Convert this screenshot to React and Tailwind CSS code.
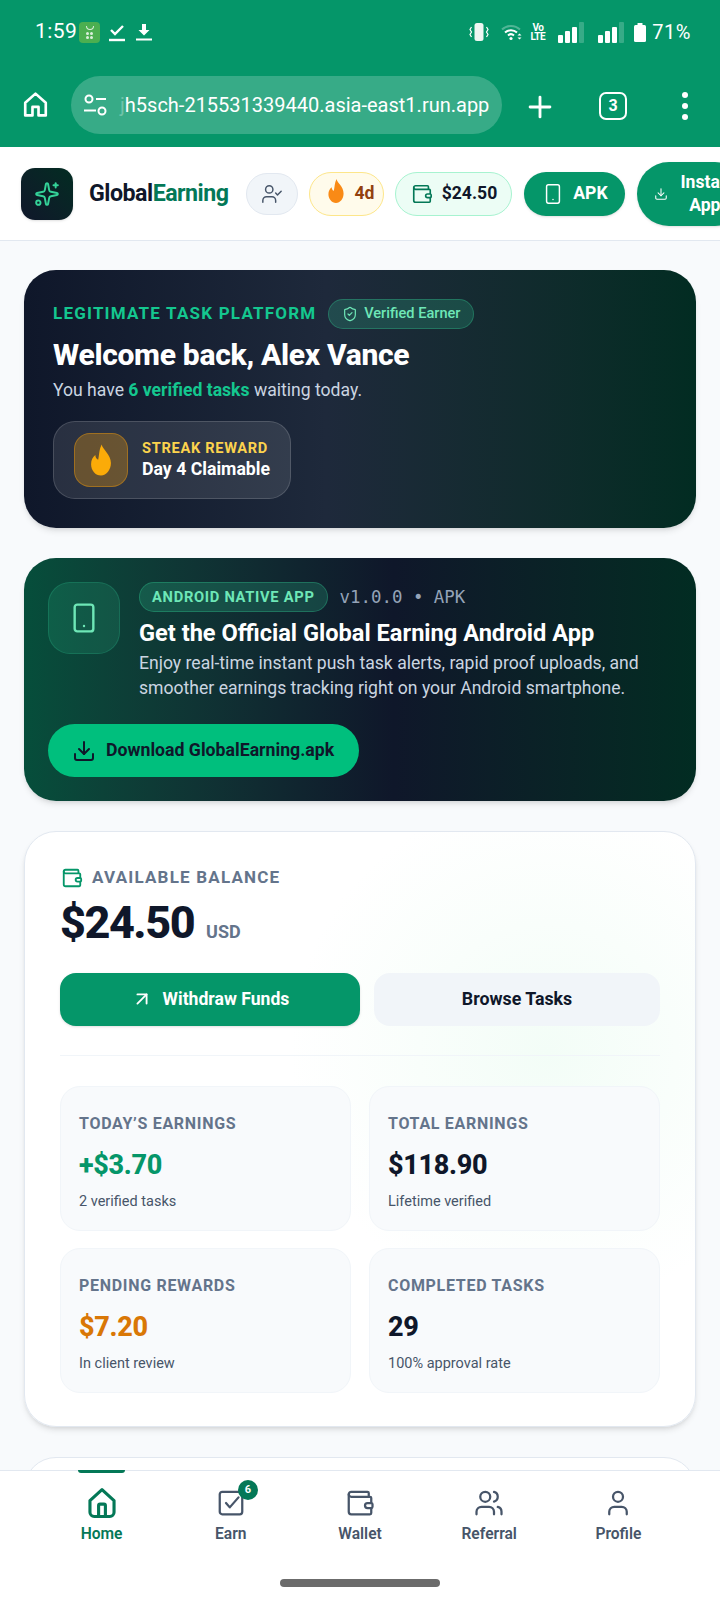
import { useState } from "react";
import {
  Plus,
  Sparkles,
  UserCheck,
  Wallet,
  Smartphone,
  Download,
  ShieldCheck,
  ArrowUpRight,
  Users,
  User,
} from "lucide-react";

const font = { fontFamily: "Roboto, sans-serif" };

const stats = [
  { label: "TODAY’S EARNINGS", value: "+$3.70", sub: "2 verified tasks", color: "text-[#059669]" },
  { label: "TOTAL EARNINGS", value: "$118.90", sub: "Lifetime verified", color: "text-[#0f172a]" },
  { label: "PENDING REWARDS", value: "$7.20", sub: "In client review", color: "text-[#d97706]" },
  { label: "COMPLETED TASKS", value: "29", sub: "100% approval rate", color: "text-[#0f172a]" },
];

const NavHome = ({ strokeWidth, className }) => (
  <svg width="34" height="34" viewBox="0 0 24 24" fill="none" stroke="currentColor" strokeWidth={strokeWidth} strokeLinejoin="round" strokeLinecap="round" className={`-my-[2px] ${className}`}>
    <path d="M3.5 10.3 12 2.5l8.5 7.8V18.5a3 3 0 0 1-3 3h-11a3 3 0 0 1-3-3z" />
    <path d="M9.6 21v-7.2a1 1 0 0 1 1-1h2.8a1 1 0 0 1 1 1V21" />
  </svg>
);

const NavEarn = ({ size, strokeWidth, className }) => (
  <svg width={size} height={size} viewBox="0 0 24 24" fill="none" stroke="currentColor" strokeWidth={strokeWidth} strokeLinecap="round" strokeLinejoin="round" className={className}>
    <rect x="3" y="3" width="18" height="18" rx="2" />
    <path d="M8 12l3 3.5 7-8" />
  </svg>
);

const navItems = [
  { label: "Home", icon: NavHome },
  { label: "Earn", icon: NavEarn, badge: 6 },
  { label: "Wallet", icon: Wallet },
  { label: "Referral", icon: Users },
  { label: "Profile", icon: User },
];

const FlamePath = ({ size, className }) => (
  <svg width={size} height={size} viewBox="0 0 24 24" className={className}>
    <path
      fill="currentColor"
      d="M12.5 1c.6 3.6 6.5 7 6.5 13.2C19 18.9 15.9 23 12 23s-7-3.6-7-8c0-2.9 1.2-5 3-6.5.1 1.7.8 3 2 3.3C10.8 8.5 10.6 4.5 12.5 1z"
    />
  </svg>
);

const Signal = ({ className }) => (
  <svg className={className} width="26" height="21" viewBox="0 0 26 21" fill="white">
    <rect x="0" y="13" width="5" height="8" rx="1" />
    <rect x="7" y="9" width="5" height="12" rx="1" />
    <rect x="14" y="5" width="5" height="16" rx="1" />
    <rect x="21" y="0" width="5" height="21" rx="1" fillOpacity="0.2" />
  </svg>
);

const StatusBar = () => (
  <div className="h-[62px] flex items-center justify-between pl-[35px] pr-[29px] pt-[2px] text-white">
    <div className="flex items-center">
      <span className="text-[21px] tracking-[0.4px]">1:59</span>
      <div className="ml-[2px] w-[21px] h-[21px] rounded-[4px] bg-[#4caf50] flex flex-col items-center justify-center">
        <div className="w-[8px] h-[4px] border-b border-x border-white/80 rounded-b-full mb-[2px]"></div>
        <div className="grid grid-cols-2 gap-[1px]">
          <div className="w-[3px] h-[3px] rounded-full bg-white/80"></div>
          <div className="w-[3px] h-[3px] rounded-full bg-white/80"></div>
          <div className="w-[3px] h-[3px] rounded-full bg-white/80"></div>
          <div className="w-[3px] h-[3px] rounded-full bg-white/80"></div>
        </div>
      </div>
      <svg className="ml-[9px]" width="16" height="20" viewBox="0 0 16 20" fill="none" stroke="white" strokeWidth="2.4">
        <path d="M2 8l4 4 8-8" />
        <path d="M0 18h16" />
      </svg>
      <svg className="ml-[11px]" width="16" height="20" viewBox="0 0 16 20" fill="white">
        <path d="M6 2h4v6h3.5L8 13.5 2.5 8H6z" />
        <rect y="16.5" width="16" height="2" />
      </svg>
    </div>
    <div className="flex items-center">
      <svg width="20" height="20" viewBox="0 0 20 20" fill="none">
        <rect x="5.5" y="1" width="9" height="18" rx="2.5" fill="#eef6f2" />
        <path d="M2.5 5l-1.5 2.5L2.5 10l-1.5 2.5L2.5 15M17.5 5l1.5 2.5L17.5 10l1.5 2.5L17.5 15" stroke="white" strokeWidth="1.2" />
      </svg>
      <svg className="ml-[12px]" width="21" height="18" viewBox="0 0 21 18" fill="none">
        <path d="M1 6.5a13 13 0 0 1 18 0" stroke="white" strokeOpacity="0.3" strokeWidth="2" />
        <path d="M4 9.5a9 9 0 0 1 12 0" stroke="white" strokeWidth="2" />
        <path d="M7 12.5a4.5 4.5 0 0 1 6 0" stroke="white" strokeWidth="2" />
        <circle cx="10" cy="15.5" r="1.6" fill="white" />
        <path d="M16.5 12.5l2-2 2 2zM16.5 14.5l2 2 2-2z" fill="white" />
      </svg>
      <div className="ml-[6px] w-[19px] text-[10px] leading-[9px] font-bold text-white tracking-tighter text-center">
        Vo
        <br />
        LTE
      </div>
      <Signal className="ml-[11px]" />
      <Signal className="ml-[14px]" />
      <svg className="ml-[10px]" width="12" height="19" viewBox="0 0 12 19" fill="white">
        <rect x="3.5" y="0" width="5" height="3" rx="0.5" />
        <rect x="0" y="2" width="12" height="17" rx="1.5" />
      </svg>
      <span className="ml-[6px] text-[20px] tracking-[0.5px]">71%</span>
    </div>
  </div>
);

const BrowserBar = () => (
  <div className="h-[85px] flex items-start pl-[21px] text-white">
    <svg className="mt-[28px] shrink-0" width="29" height="29" viewBox="0 0 24 24" fill="none" stroke="white" strokeWidth="2.2" strokeLinejoin="round">
      <path d="M3.5 10.5 12 3l8.5 7.5V21H14.5v-7h-5v7H3.5z" />
    </svg>
    <div className="ml-[21px] mt-[14px] w-[431px] shrink-0 h-[58px] rounded-full bg-white/20 flex items-center pl-[11px] overflow-hidden">
      <svg className="shrink-0" width="26" height="26" viewBox="0 0 26 26" fill="none" stroke="white" strokeWidth="2">
        <circle cx="7" cy="7" r="3.5" />
        <path d="M14 7h10M2 18.5h12" />
        <circle cx="20" cy="19" r="3.5" />
      </svg>
      <span className="ml-[12px] text-white/30 text-[20px]">j</span>
      <span className="text-[20px] leading-none whitespace-nowrap">h5sch-215531339440.asia-east1.run.app</span>
    </div>
    <Plus size={34} strokeWidth={2} className="ml-[21px] mt-[28px] shrink-0" />
    <div className="ml-[42px] mt-[30px] shrink-0 w-[28px] h-[28px] border-[2.5px] border-white rounded-[7px] flex items-center justify-center text-[16px] font-bold">
      3
    </div>
    <div className="ml-[55px] mt-[30px] flex flex-col gap-[5px]">
      <div className="w-[6px] h-[6px] rounded-full bg-white"></div>
      <div className="w-[6px] h-[6px] rounded-full bg-white"></div>
      <div className="w-[6px] h-[6px] rounded-full bg-white"></div>
    </div>
  </div>
);

const AppHeader = () => (
  <div className="h-[94px] bg-white border-b border-[#e2e8f0] flex items-center pl-[21px] overflow-hidden whitespace-nowrap">
    <div className="w-[52px] h-[52px] shrink-0 rounded-[14px] bg-gradient-to-tr from-[#0f172a] to-[#022c22] flex items-center justify-center shadow-sm">
      <Sparkles size={26} strokeWidth={1.8} className="text-[#34d399]" />
    </div>
    <div className="ml-[16px] text-[23.2px] font-bold tracking-[-0.5px] text-[#0f172a]">
      Global<span className="text-[#047857]">Earning</span>
    </div>
    <div className="ml-[18px] shrink-0 w-[52px] h-[42px] rounded-full bg-[#f1f5f9] border border-[#e2e8f0] flex items-center justify-center">
      <UserCheck size={22} strokeWidth={1.6} className="text-[#475569]" />
    </div>
    <div className="ml-[11px] shrink-0 w-[75px] h-[44px] rounded-full bg-[#fffbeb] border border-[#fde68a] flex items-center pl-[13px] gap-[5px]">
      <FlamePath size={26} className="text-[#f98a16] mb-[6px]" />
      <span className="text-[17.6px] font-bold text-[#92400e]">4d</span>
    </div>
    <div className="ml-[11px] shrink-0 w-[117px] h-[44px] rounded-full bg-[#ecfdf5] border border-[#a7f3d0] flex items-center justify-center gap-[9px]">
      <Wallet size={22} strokeWidth={1.8} className="text-[#047857]" />
      <span className="text-[17.6px] font-bold text-[#0f172a]">$24.50</span>
    </div>
    <div className="ml-[12px] shrink-0 w-[101px] h-[44px] rounded-full bg-[#059669] flex items-center justify-center gap-[9px] text-white shadow-sm">
      <Smartphone size={22} strokeWidth={1.6} />
      <span className="text-[17.6px] font-bold">APK</span>
    </div>
    <div className="ml-[12px] shrink-0 w-[110px] h-[64px] rounded-full bg-[#059669] flex items-center pl-[17px] gap-[12px] text-white shadow-sm">
      <Download size={14} strokeWidth={1.8} />
      <span className="text-[17.6px] leading-[23px] font-bold text-center">
        Install
        <br />
        App
      </span>
    </div>
  </div>
);

const WelcomeCard = () => (
  <div className="h-[258px] rounded-[32px] bg-gradient-to-r from-[#0f172a] via-[#1e293b] via-45% to-[#022c22] shadow-md pl-[29px] pt-[29px]">
    <div className="flex items-center">
      <span className="text-[17px] font-bold tracking-[1.2px] text-[#14c78f]">LEGITIMATE TASK PLATFORM</span>
      <div className="ml-[12px] h-[30px] w-[146px] rounded-full bg-[#34d399]/20 border border-[#34d399]/30 flex items-center justify-center gap-[6px]">
        <ShieldCheck size={16} strokeWidth={1.8} className="text-[#6ee7b7]" />
        <span className="text-[14.6px] font-medium text-[#6ee7b7]">Verified Earner</span>
      </div>
    </div>
    <h1 className="mt-[8px] text-[30px] leading-[36px] font-extrabold tracking-[-0.3px] text-white">Welcome back, Alex Vance</h1>
    <p className="mt-[5px] text-[17.6px] leading-[24px] text-[#cbd5e1]">
      You have <span className="font-bold text-[#14c78f]">6 verified tasks</span> waiting today.
    </p>
    <div className="mt-[19px] w-[238px] h-[78px] rounded-[22px] bg-white/10 border border-white/15 flex items-center pl-[20px]">
      <div className="w-[54px] h-[54px] rounded-[16px] bg-[#f59e0b]/30 border border-[#f59e0b]/40 flex items-center justify-center">
        <FlamePath size={34} className="text-[#fbab08]" />
      </div>
      <div className="ml-[14px] mb-[3px]">
        <div className="text-[14.6px] leading-[20px] font-bold tracking-[0.7px] text-[#fcd34d]">STREAK REWARD</div>
        <div className="text-[17.7px] leading-[22px] font-bold text-white">Day 4 Claimable</div>
      </div>
    </div>
  </div>
);

const ApkCard = () => (
  <div className="mt-[30px] h-[243px] rounded-[32px] bg-gradient-to-r from-[#064e3b] via-[#0f172a] via-55% to-[#022c22] shadow-md pl-[24px] pt-[24px]">
    <div className="flex">
      <div className="w-[72px] h-[72px] shrink-0 rounded-[22px] bg-[#34d399]/15 border border-[#34d399]/20 flex items-center justify-center">
        <Smartphone size={32} strokeWidth={1.8} className="text-[#6ee7b7]" />
      </div>
      <div className="ml-[19px]">
        <div className="flex items-center">
          <span className="h-[30px] px-[12px] flex items-center rounded-full bg-[#34d399]/20 border border-[#34d399]/30 text-[14.7px] font-bold tracking-[0.7px] text-[#6ee7b7]">
            ANDROID NATIVE APP
          </span>
          <span className="ml-[12px] text-[17.4px] font-['DejaVu_Sans_Mono',monospace] text-[#94a3b8]">v1.0.0 • APK</span>
        </div>
        <h2 className="mt-[6px] text-[23.6px] leading-[30px] font-bold text-white whitespace-nowrap">Get the Official Global Earning Android App</h2>
        <p className="mt-[3px] text-[17.6px] leading-[25px] text-[#cbd5e1] whitespace-nowrap">
          Enjoy real-time instant push task alerts, rapid proof uploads, and
          <br />
          smoother earnings tracking right on your Android smartphone.
        </p>
      </div>
    </div>
    <button className="mt-[23px] w-[311px] h-[53px] rounded-full bg-[#00bf7d] flex items-center pl-[24px] gap-[10px] text-[#0f172a]">
      <Download size={24} strokeWidth={2} />
      <span className="text-[17.7px] font-bold">Download GlobalEarning.apk</span>
    </button>
  </div>
);

const BalanceCard = () => (
  <div className="mt-[30px] h-[596px] rounded-[32px] bg-[radial-gradient(circle_at_78%_37%,#f3fdf7_0%,#ffffff_40%)] border border-[#e2e8f0] shadow-md px-[35px] pt-[33px]">
    <div className="flex items-center gap-[9px] pl-[1px]">
      <Wallet size={22} strokeWidth={2} className="text-[#059669]" />
      <span className="text-[17px] font-bold tracking-[1.2px] text-[#64748b]">AVAILABLE BALANCE</span>
    </div>
    <div className="mt-[6px] flex items-baseline">
      <span className="text-[45px] leading-[52px] font-extrabold tracking-[-1.5px] text-[#0f172a]">$24.50</span>
      <span className="ml-[12px] text-[18px] font-bold text-[#64748b]">USD</span>
    </div>
    <div className="mt-[24px] flex gap-[14px]">
      <button className="w-[300px] h-[53px] rounded-[16px] bg-[#059669] text-white flex items-center justify-center gap-[10px] shadow-sm">
        <ArrowUpRight size={22} strokeWidth={2} />
        <span className="text-[17.6px] font-bold">Withdraw Funds</span>
      </button>
      <button className="w-[286px] h-[53px] rounded-[16px] bg-[#f1f5f9] text-[#0f172a] text-[17.8px] font-bold">Browse Tasks</button>
    </div>
    <div className="mt-[29px] border-t border-[#f1f5f9]"></div>
    <div className="mt-[30px] grid grid-cols-2 gap-x-[18px] gap-y-[17px]">
      {stats.map((s) => (
        <div key={s.label} className="h-[145px] rounded-[20px] bg-[#f8fafc] border border-[#f1f5f9] pl-[18px] pt-[27px]">
          <div className="text-[16px] leading-[20px] font-bold tracking-[0.7px] text-[#64748b]">{s.label}</div>
          <div className={`mt-[15px] text-[27px] leading-[32px] font-extrabold tracking-[-0.3px] ${s.color}`}>{s.value}</div>
          <div className="mt-[11px] text-[14.5px] leading-[20px] text-[#475569]">{s.sub}</div>
        </div>
      ))}
    </div>
  </div>
);

const BottomNav = ({ active, setActive }) => (
  <div className="absolute left-0 right-0 bottom-0 h-[130px] bg-white border-t border-[#e2e8f0]">
    <div className="grid grid-cols-5 px-[37px]">
      {navItems.map((item) => {
        const Icon = item.icon;
        const on = active === item.label;
        return (
          <button key={item.label} onClick={() => setActive(item.label)} className="relative flex flex-col items-center pt-[17px]">
            {on && <div className="absolute top-[-1px] w-[47px] h-[3px] bg-[#047857] rounded-b-sm"></div>}
            <div className="relative">
              <Icon size={30} strokeWidth={on ? 2.2 : 1.8} className={on ? "text-[#047857]" : "text-[#475569]"} />
              {item.badge && (
                <span className="absolute top-[-8px] right-[-12px] w-[20px] h-[20px] rounded-full bg-[#047857] text-white text-[11px] font-bold flex items-center justify-center">
                  {item.badge}
                </span>
              )}
            </div>
            <span className={`mt-[5px] text-[15.6px] leading-[22px] font-semibold ${on ? "text-[#047857]" : "text-[#475569]"}`}>{item.label}</span>
          </button>
        );
      })}
    </div>
    <div className="absolute left-[280px] top-[108px] w-[160px] h-[8px] rounded-full bg-[#6b6b6b]"></div>
  </div>
);

const App = () => {
  const [active, setActive] = useState("Home");

  return (
    <div style={font} className="relative w-[720px] h-[1600px] overflow-hidden bg-[#f8fafc]">
      <div className="h-[147px] bg-[#059669]">
        <StatusBar />
        <BrowserBar />
      </div>
      <AppHeader />
      <div className="px-[24px] pt-[29px]">
        <WelcomeCard />
        <ApkCard />
        <BalanceCard />
        <div className="mt-[30px] h-[120px] rounded-[32px] bg-white border border-[#e2e8f0]"></div>
      </div>
      <BottomNav active={active} setActive={setActive} />
    </div>
  );
};

export default App;
